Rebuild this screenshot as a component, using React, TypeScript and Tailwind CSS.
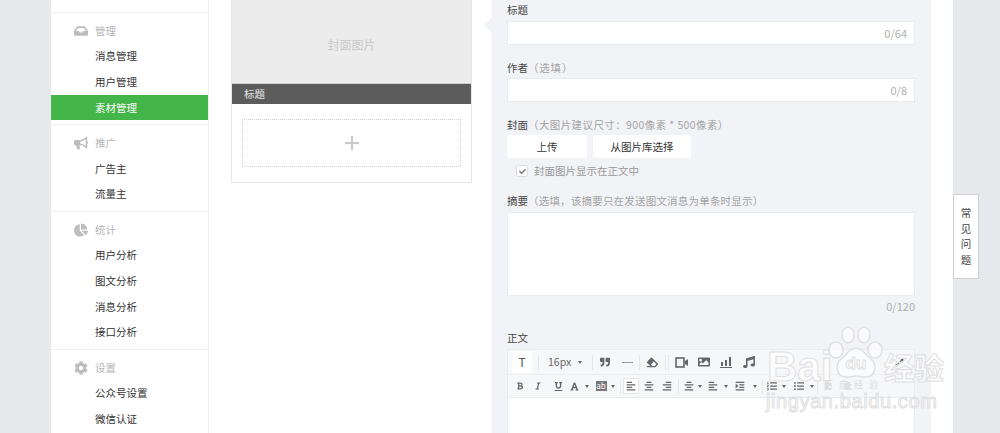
import React from "react";
import { FaInbox, FaBullhorn, FaChartPie, FaCog, FaQuoteRight, FaEraser, FaImage, FaMusic, FaBold, FaItalic, FaUnderline, FaFont, FaAlignLeft, FaAlignCenter, FaAlignRight, FaListOl, FaListUl, FaCheck, FaExpandAlt, FaIndent } from "react-icons/fa";

const font = { fontFamily: '"Noto Sans CJK SC", "Liberation Sans", sans-serif' };

function Section({ icon, title, items, active }: { icon: React.ReactNode; title: string; items: string[]; active?: string }) {
  return (
    <div className="border-t border-[#eeeeee] pt-[5px] pb-[4px]">
      <div className="h-[25.5px] flex items-center pl-[23px] text-[#b5b5b5] text-[10.5px]">
        <span className="w-[21px] flex text-[#bdbdbd] text-[14px]">{icon}</span>
        {title}
      </div>
      {items.map((t) => (
        <div key={t} className={`h-[25.6px] flex items-center pl-[44px] text-[10.5px] ${t === active ? "bg-[#44b549] text-white" : "text-[#333333]"}`}>
          {t}
        </div>
      ))}
    </div>
  );
}

function Label({ main, note, className, noteClass = "tracking-[0.4px]" }: { main: string; note?: string; className: string; noteClass?: string }) {
  return (
    <div className={`text-[10.5px] leading-[14px] text-[#444444] ${className}`}>
      {main}
      {note && <span className={`text-[#a3a3a3] ${noteClass}`}>{note}</span>}
    </div>
  );
}

function Field({ count, className }: { count: string; className: string }) {
  return (
    <div className={`h-[24px] bg-white border border-[#eaebef] flex items-center justify-end pr-[7px] text-[11px] text-[#aeaeae] ${className}`}>
      {count}
    </div>
  );
}

function Cell({ w, children }: { w: string; children?: React.ReactNode }) {
  return <span className={`${w} flex items-center justify-center shrink-0 text-[#666666]`}>{children}</span>;
}

const Caret = () => <span className="w-0 h-0 border-x-[2px] border-x-transparent border-t-[3px] border-t-[#666666]" />;
const Sep = ({ className }: { className: string }) => <span className={`w-px h-[15px] bg-[#e6e7ec] shrink-0 ${className}`} />;

export default function App() {
  return (
    <div className="relative w-[1000px] h-[433px] overflow-hidden bg-[#e7e8eb] pl-[51px]" style={font}>
      <div className="w-[902px] h-[433px] bg-white flex">
        <aside className="w-[158px] h-[433px] shrink-0 border-r border-[#eeeeee] pt-[12px] overflow-hidden">
          <Section icon={<FaInbox />} title="管理" items={["消息管理", "用户管理", "素材管理"]} active="素材管理" />
          <Section icon={<FaBullhorn />} title="推广" items={["广告主", "流量主"]} />
          <Section icon={<FaChartPie />} title="统计" items={["用户分析", "图文分析", "消息分析", "接口分析"]} />
          <Section icon={<FaCog />} title="设置" items={["公众号设置", "微信认证"]} />
        </aside>

        <div className="w-[241px] ml-[22px] h-[183px] shrink-0 border border-t-0 border-[#e7e7eb] flex flex-col">
          <div className="h-[83px] bg-[#ececec] flex items-center justify-center text-[12px] text-[#c9c9c9] pt-[6px]">封面图片</div>
          <div className="h-[21px] bg-[#5c5c5c] border-t border-[#cfcfcf] pl-[12px] flex items-center text-[10.5px] text-[#e8e8e8]">标题</div>
          <div className="mt-[15px] mx-[10px] h-[48px] border border-dotted border-[#d0d0d0] flex items-center justify-center">
            <svg width="16" height="16" viewBox="0 0 16 16"><path d="M8 1v14M1 8h14" stroke="#c8c8c8" strokeWidth="2" /></svg>
          </div>
        </div>

        <main className="relative w-[439px] ml-[20px] h-[433px] shrink-0 bg-[#f2f3f7] border-l border-[#eceef3] pl-[14px] pr-[16px] overflow-visible">
          <span className="absolute left-[-9px] top-[16px] w-0 h-0 border-y-[9px] border-y-transparent border-r-[9px] border-r-[#f2f3f7]" />
          <Label main="标题" className="mt-[3px]" />
          <Field count="0/64" className="mt-[4px]" />
          <Label main="作者" note="（选填）" className="mt-[16px]" noteClass="tracking-[0.8px]" />
          <Field count="0/8" className="mt-[3px]" />
          <Label main="封面" note="（大图片建议尺寸：900像素 * 500像素）" className="mt-[16px]" />
          <div className="flex gap-[6px] mt-[3px]">
            <div className="w-[80px] h-[23px] bg-white rounded-[2px] flex items-center justify-center text-[10.5px] text-[#333333]">上传</div>
            <div className="w-[98px] h-[23px] bg-white rounded-[2px] flex items-center justify-center text-[10.5px] text-[#333333]">从图片库选择</div>
          </div>
          <div className="flex items-center mt-[7px] ml-[9px] text-[10.5px] leading-[12px] text-[#9a9a9a]">
            <span className="w-[12px] h-[12px] bg-white border border-[#dcdcdc] rounded-[2px] flex items-center justify-center mr-[6px] text-[7px] text-[#777777]"><FaCheck /></span>
            封面图片显示在正文中
          </div>
          <Label main="摘要" note="（选填，该摘要只在发送图文消息为单条时显示）" className="mt-[17px]" noteClass="tracking-[0.2px]" />
          <div className="h-[84px] bg-white border border-[#eaebef] mt-[4px]" />
          <div className="text-right text-[11px] leading-[14px] text-[#aeaeae] mt-[3px]">0/120</div>
          <Label main="正文" className="mt-[18px]" />
          <div className="mt-[4px] border border-[#eaebef] bg-[#f6f7f9]">
            <div className="h-[24px] flex items-center pl-[4px] pr-[6px] text-[11px]">
              <span className="w-[20px] h-[22px] bg-white flex items-center justify-center text-[#555555] text-[12px]">T</span>
              <Sep className="ml-[6px]" />
              <span className="ml-[9px] text-[10.5px] text-[#666666] w-[28px]">16px</span>
              <Cell w="w-[8px]"><Caret /></Cell>
              <Sep className="ml-[8px]" />
              <Cell w="w-[24px]"><FaQuoteRight size={10} /></Cell>
              <Cell w="w-[20px]"><span className="w-[11px] h-px bg-[#999999]" /></Cell>
              <Sep className="ml-[2px]" />
              <Cell w="w-[24px]"><FaEraser size={11} className="-scale-x-100" /></Cell>
              <Sep className="ml-[1px]" />
              <Sep className="ml-[2px]" />
              <Cell w="w-[24px]">
                <svg width="13" height="11" viewBox="0 0 13 11" fill="none"><rect x="1" y="1" width="8" height="9" stroke="#666666" strokeWidth="1.6" /><path d="M10 4l3-2v7l-3-2z" fill="#666666" /></svg>
              </Cell>
              <Cell w="w-[22px]"><FaImage size={12} /></Cell>
              <Cell w="w-[22px]">
                <svg width="12" height="12" viewBox="0 0 12 12" fill="#666666"><rect x="1" y="6" width="2" height="4" /><rect x="5" y="4" width="2" height="6" /><rect x="9" y="1" width="2" height="9" /><rect x="0" y="11" width="12" height="1" /></svg>
              </Cell>
              <Cell w="w-[23px]"><FaMusic size={12} /></Cell>
              <span className="ml-auto flex text-[#666666] text-[9px] mr-[4px]"><FaExpandAlt /></span>
            </div>
            <div className="h-[23px] flex items-center pl-[3px] border-t border-[#eeeff3]">
              <Cell w="w-[18px]"><FaBold size={8} /></Cell>
              <Cell w="w-[18px]"><FaItalic size={8} /></Cell>
              <Cell w="w-[22px]"><FaUnderline size={9} /></Cell>
              <Cell w="w-[10px]"><FaFont size={9} /></Cell>
              <Cell w="w-[16px]"><Caret /></Cell>
              <Cell w="w-[12px]"><span className="w-[11px] h-[10px] bg-[#777777] text-white text-[8px] leading-[10px] text-center">ab</span></Cell>
              <Cell w="w-[12px]"><Caret /></Cell>
              <Sep className="ml-[1px]" />
              <span className="ml-[2px] w-[16px] h-[16px] border border-[#e4e5ea] bg-white flex items-center justify-center text-[#666666]"><FaAlignLeft size={10} /></span>
              <Cell w="w-[20px]"><FaAlignCenter size={10} /></Cell>
              <Cell w="w-[16px]"><FaAlignRight size={10} /></Cell>
              <Sep className="ml-[3px]" />
              <Cell w="w-[20px]"><FaAlignCenter size={10} /></Cell>
              <Cell w="w-[2px]"><Caret /></Cell>
              <Cell w="w-[24px]"><FaAlignLeft size={10} /></Cell>
              <Cell w="w-[2px]"><Caret /></Cell>
              <Cell w="w-[26px]"><FaIndent size={10} /></Cell>
              <Cell w="w-[4px]"><Caret /></Cell>
              <Sep className="ml-[5px]" />
              <Cell w="w-[18px]"><FaListOl size={10} /></Cell>
              <Cell w="w-[6px]"><Caret /></Cell>
              <Cell w="w-[24px]"><FaListUl size={10} /></Cell>
              <Cell w="w-[2px]"><Caret /></Cell>
              <Sep className="ml-[4px]" />
              <span className="flex opacity-30">
                <Cell w="w-[20px]"><FaAlignLeft size={8} /></Cell>
                <Cell w="w-[20px]"><FaAlignCenter size={8} /></Cell>
              </span>
            </div>
          </div>
          <div className="h-[40px] bg-white border-x border-[#eaebef]" />
        </main>
      </div>

      <div className="absolute left-[953px] top-[194px] w-[26px] h-[85px] bg-white border border-[#cfcfcf] flex flex-col items-center justify-center gap-[3.5px] text-[10.5px] leading-[12px] text-[#444444]">
        <span>常</span><span>见</span><span>问</span><span>题</span>
      </div>

      {/* Baidu watermark */}
      <div className="absolute left-[767px] top-[350px] text-[42px] leading-[34px] font-bold text-white/70 [-webkit-text-stroke:1px_#e0e0e0]" style={{ fontFamily: '"Liberation Sans", sans-serif' }}>Bai</div>
      <svg className="absolute left-[828px] top-[326px]" width="56" height="54" viewBox="0 0 56 54">
        <g fill="#ffffff" fillOpacity="0.6" stroke="#e0e0e0" strokeWidth="1.5">
          <ellipse cx="8" cy="24" rx="7" ry="8" />
          <ellipse cx="20" cy="9" rx="6" ry="8" />
          <ellipse cx="36" cy="9" rx="6" ry="8" />
          <ellipse cx="47" cy="24" rx="7" ry="8" />
          <path d="M28 22c-7 0-9 7-15 11-7 6-4 19 6 18 4 0 6-1 9-1s6 1 10 1c9 0 12-12 5-18-6-4-8-11-15-11z" />
        </g>
        <text x="28" y="43" textAnchor="middle" fontSize="17" fontWeight="bold" fill="#ffffff" fillOpacity="0.7" stroke="#e0e0e0" fontFamily="Liberation Sans">du</text>
      </svg>
      <div className="absolute left-[824px] top-[380px] text-[9px] leading-[10px] tracking-[6px] text-[#dcdcdc]">百度经验</div>
      <div className="absolute left-[884px] top-[346px] text-[30px] leading-[40px] font-bold text-white/70 [-webkit-text-stroke:1px_#e0e0e0]">经验</div>
      <div className="absolute left-[766px] top-[390px] text-[20px] leading-[22px] tracking-[0.6px] text-white/70 [-webkit-text-stroke:1px_#e0e0e0]" style={{ fontFamily: '"Liberation Sans", sans-serif' }}>jingyan.baidu.com</div>
    </div>
  );
}
